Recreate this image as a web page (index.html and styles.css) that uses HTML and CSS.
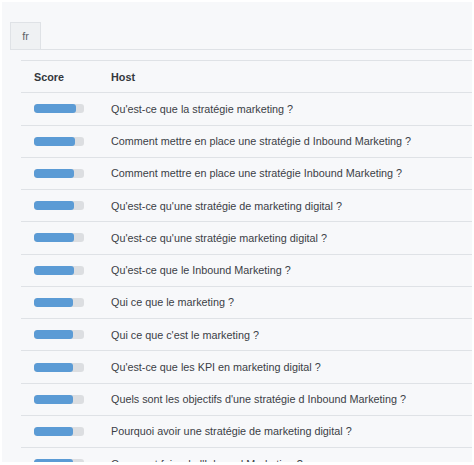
FILE: index.html
```html
<!DOCTYPE html>
<html lang="fr">
<head>
<meta charset="utf-8">
<title>Scores</title>
<link rel="stylesheet" href="styles.css">
</head>
<body>
<div class="panel">
  <div class="tabs">
    <div class="tab">fr</div>
  </div>
  <table class="scores">
    <thead>
      <tr><th class="col-score">Score</th><th>Host</th></tr>
    </thead>
    <tbody>
      <tr><td class="col-score"><div class="bar"><div class="fill" style="width:84%"></div></div></td><td>Qu'est-ce que la stratégie marketing ?</td></tr>
      <tr><td class="col-score"><div class="bar"><div class="fill" style="width:82%"></div></div></td><td>Comment mettre en place une stratégie d Inbound Marketing ?</td></tr>
      <tr><td class="col-score"><div class="bar"><div class="fill" style="width:80%"></div></div></td><td>Comment mettre en place une stratégie Inbound Marketing ?</td></tr>
      <tr><td class="col-score"><div class="bar"><div class="fill" style="width:80%"></div></div></td><td>Qu'est-ce qu'une stratégie de marketing digital ?</td></tr>
      <tr><td class="col-score"><div class="bar"><div class="fill" style="width:80%"></div></div></td><td>Qu'est-ce qu'une stratégie marketing digital ?</td></tr>
      <tr><td class="col-score"><div class="bar"><div class="fill" style="width:80%"></div></div></td><td>Qu'est-ce que le Inbound Marketing ?</td></tr>
      <tr><td class="col-score"><div class="bar"><div class="fill" style="width:78%"></div></div></td><td>Qui ce que le marketing ?</td></tr>
      <tr><td class="col-score"><div class="bar"><div class="fill" style="width:78%"></div></div></td><td>Qui ce que c'est le marketing ?</td></tr>
      <tr><td class="col-score"><div class="bar"><div class="fill" style="width:78%"></div></div></td><td>Qu'est-ce que les KPI en marketing digital ?</td></tr>
      <tr><td class="col-score"><div class="bar"><div class="fill" style="width:78%"></div></div></td><td>Quels sont les objectifs d'une stratégie d Inbound Marketing ?</td></tr>
      <tr><td class="col-score"><div class="bar"><div class="fill" style="width:78%"></div></div></td><td>Pourquoi avoir une stratégie de marketing digital ?</td></tr>
      <tr><td class="col-score"><div class="bar"><div class="fill" style="width:78%"></div></div></td><td>Comment faire de l'Inbound Marketing ?</td></tr>
    </tbody>
  </table>
</div>
</body>
</html>
```
FILE: styles.css
```css
html, body {
  margin: 0;
  padding: 0;
  background: #ffffff;
}
body {
  font-family: "Liberation Sans", Arial, Helvetica, sans-serif;
  font-size: 10.8px;
  color: #3b4046;
}
.panel {
  margin: 2px 2px 0 2px;
  height: 460px;
  overflow: hidden;
  background: #f7f8fa;
  padding: 20px 0 0 8px;
  box-sizing: border-box;
}
.tabs {
  display: flex;
  border-bottom: 1px solid #dfe2e6;
}
.tab {
  width: 29px;
  height: 26px;
  border: 1px solid #dfe2e6;
  border-bottom: none;
  background: #eff1f3;
  color: #5f6368;
  font-size: 11px;
  line-height: 26px;
  text-align: center;
  box-sizing: content-box;
}
.scores {
  margin: 10px 0 0 11px;
  width: calc(100% - 11px);
  border-collapse: collapse;
  border-top: 1px solid #dfe2e6;
}
.scores th,
.scores td {
  text-align: left;
  padding: 7.5px 13px;
  line-height: 16.27px;
  border-bottom: 1px solid #dfe2e6;
  white-space: nowrap;
  vertical-align: middle;
}
.scores th {
  font-weight: bold;
  color: #33373c;
}
.scores .col-score {
  width: 51px;
}
.bar {
  width: 50px;
  height: 9px;
  border-radius: 3px;
  background: #dcdee1;
  overflow: hidden;
}
.fill {
  height: 100%;
  background: #5b9bd5;
  border-radius: 3px;
}
```
